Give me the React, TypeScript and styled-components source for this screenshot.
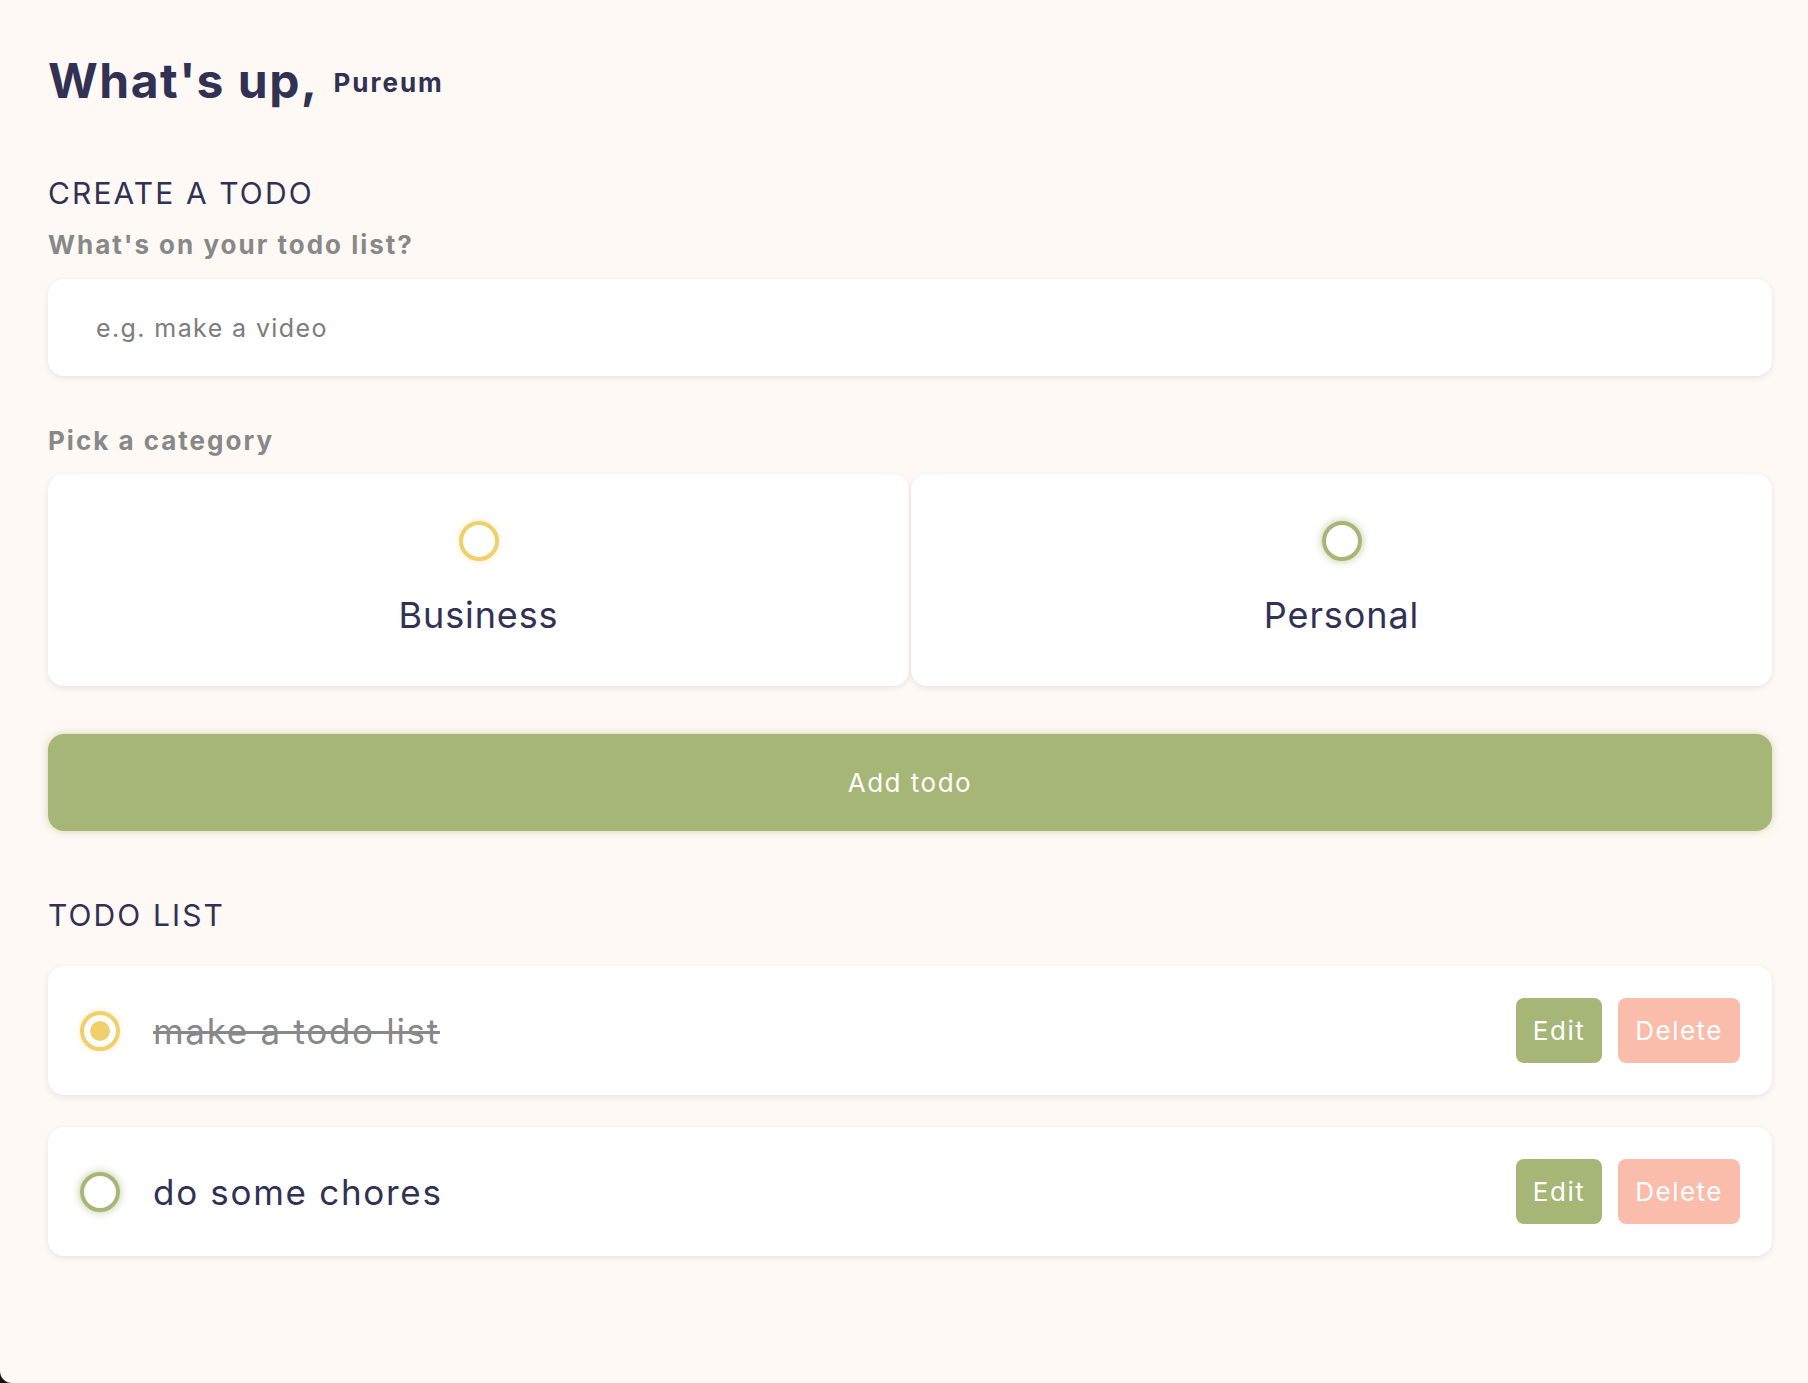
import React from "react";
import styled, { createGlobalStyle, css } from "styled-components";

const GlobalStyle = createGlobalStyle`
  * { box-sizing: border-box; margin: 0; padding: 0; }
  html, body { background: #111; }
  body { margin: 0; font-family: Inter, "Open Sans", sans-serif; color: #313154; }
  input, button { font-family: inherit; border: none; outline: none; background: none; }
`;

const C = {
  bg: "#fff9f6",
  dark: "#313154",
  grey: "#888888",
  green: "#a5b677",
  yellow: "#f0d06b",
  danger: "#fbbdab",
};

const Page = styled.main`
  min-height: 1383px;
  background: ${C.bg};
  border-bottom-left-radius: 12px;
  padding: 0 36px 40px 48px;
`;

const Greeting = styled.section`
  padding-top: 51px;
`;

const Title = styled.h2`
  display: flex;
  align-items: center;
  height: 58px;
  font-size: 48px;
  font-weight: 700;
  color: ${C.dark};
  letter-spacing: 1.5px;
`;

const NameInput = styled.input`
  margin-left: 15px;
  margin-top: 4px;
  flex: 1 1 0%;
  min-width: 0;
  font-size: 26px;
  font-weight: 700;
  letter-spacing: 2px;
  color: ${C.dark};
`;

const Section = styled.section<{ $top: number }>`
  margin-top: ${(p) => p.$top}px;
`;

const Heading = styled.h3`
  font-size: 30px;
  line-height: 36px;
  font-weight: 400;
  letter-spacing: 2.1px;
  color: ${C.dark};
`;

const Label = styled.h4<{ $top: number }>`
  margin-top: ${(p) => p.$top}px;
  font-size: 26px;
  line-height: 32px;
  font-weight: 700;
  letter-spacing: 2px;
  color: ${C.grey};
`;

const cardShadow = css`
  box-shadow: 0 2px 6px rgba(0, 0, 0, 0.09);
`;

const TextInput = styled.input`
  display: block;
  width: 100%;
  height: 97px;
  margin-top: 18px;
  padding: 0 48px;
  font-size: 25px;
  letter-spacing: 1.4px;
  color: ${C.dark};
  background: #fff;
  border-radius: 16px;
  caret-color: ${C.dark};
  ${cardShadow};
  &::placeholder { color: #7c7c7c; }
`;

const Options = styled.div`
  display: grid;
  grid-template-columns: repeat(2, 1fr);
  gap: 2px;
  margin-top: 17px;
`;

const OptionCard = styled.label`
  display: flex;
  flex-direction: column;
  align-items: center;
  justify-content: center;
  height: 212px;
  background: #fff;
  border-radius: 16px;
  cursor: pointer;
  ${cardShadow};
`;

const Bubble = styled.span<{ $kind: "business" | "personal"; $checked?: boolean }>`
  display: flex;
  align-items: center;
  justify-content: center;
  width: 40px;
  height: 40px;
  border-radius: 999px;
  border: 4px solid ${(p) => (p.$kind === "business" ? C.yellow : C.green)};
  box-shadow: ${(p) =>
    p.$kind === "business" ? "0 0 6px rgba(240,208,107,0.4)" : "0 0 8px rgba(165,182,119,0.75)"};
  &::after {
    content: "";
    display: block;
    width: ${(p) => (p.$checked ? "20px" : "0")};
    height: ${(p) => (p.$checked ? "20px" : "0")};
    border-radius: 999px;
    background: ${(p) => (p.$kind === "business" ? C.yellow : C.green)};
  }
`;

const OptionText = styled.div`
  margin-top: 32px;
  margin-bottom: 2px;
  font-size: 36px;
  line-height: 44px;
  letter-spacing: 0.9px;
  color: ${C.dark};
`;

const SubmitButton = styled.button`
  display: block;
  width: 100%;
  height: 97px;
  margin-top: 48px;
  font-size: 26px;
  letter-spacing: 1.5px;
  color: #fff;
  background: ${C.green};
  border-radius: 16px;
  box-shadow: 0 0 8px rgba(165, 182, 119, 0.55);
  cursor: pointer;
`;

const List = styled.div`
  display: flex;
  flex-direction: column;
  gap: 32px;
  margin-top: 33px;
`;

const Item = styled.div`
  display: flex;
  align-items: center;
  height: 129px;
  padding: 0 32px;
  background: #fff;
  border-radius: 16px;
  ${cardShadow};
`;

const Check = styled.label`
  display: block;
  margin-right: 33px;
`;

const ItemText = styled.div<{ $done?: boolean }>`
  flex: 1 1 0%;
  font-size: 35px;
  letter-spacing: 1.7px;
  color: ${(p) => (p.$done ? C.grey : C.dark)};
  text-decoration: ${(p) => (p.$done ? "line-through" : "none")};
`;

const Actions = styled.div`
  display: flex;
  align-items: center;
  gap: 16px;
`;

const ActionButton = styled.button<{ $variant: "edit" | "delete" }>`
  display: block;
  height: 65px;
  padding: 0 17px;
  font-size: 26px;
  letter-spacing: 1.5px;
  color: #fff;
  border-radius: 8px;
  background: ${(p) => (p.$variant === "edit" ? C.green : C.danger)};
  cursor: pointer;
`;

const todos = [
  { text: "make a todo list", kind: "business" as const, done: true },
  { text: "do some chores", kind: "personal" as const, done: false },
];

export default function App() {
  return (
    <>
      <GlobalStyle />
      <Page>
        <Greeting>
          <Title>
            What's up,
            <NameInput defaultValue="Pureum" />
          </Title>
        </Greeting>

        <Section $top={66}>
          <Heading>CREATE A TODO</Heading>
          <Label $top={18}>What's on your todo list?</Label>
          <TextInput placeholder="e.g. make a video" autoFocus />
          <Label $top={49}>Pick a category</Label>
          <Options>
            <OptionCard>
              <Bubble $kind="business" />
              <OptionText>Business</OptionText>
            </OptionCard>
            <OptionCard>
              <Bubble $kind="personal" />
              <OptionText>Personal</OptionText>
            </OptionCard>
          </Options>
          <SubmitButton>Add todo</SubmitButton>
        </Section>

        <Section $top={66}>
          <Heading>TODO LIST</Heading>
          <List>
            {todos.map((t) => (
              <Item key={t.text}>
                <Check>
                  <Bubble $kind={t.kind} $checked={t.done} />
                </Check>
                <ItemText $done={t.done}>{t.text}</ItemText>
                <Actions>
                  <ActionButton $variant="edit">Edit</ActionButton>
                  <ActionButton $variant="delete">Delete</ActionButton>
                </Actions>
              </Item>
            ))}
          </List>
        </Section>
      </Page>
    </>
  );
}
